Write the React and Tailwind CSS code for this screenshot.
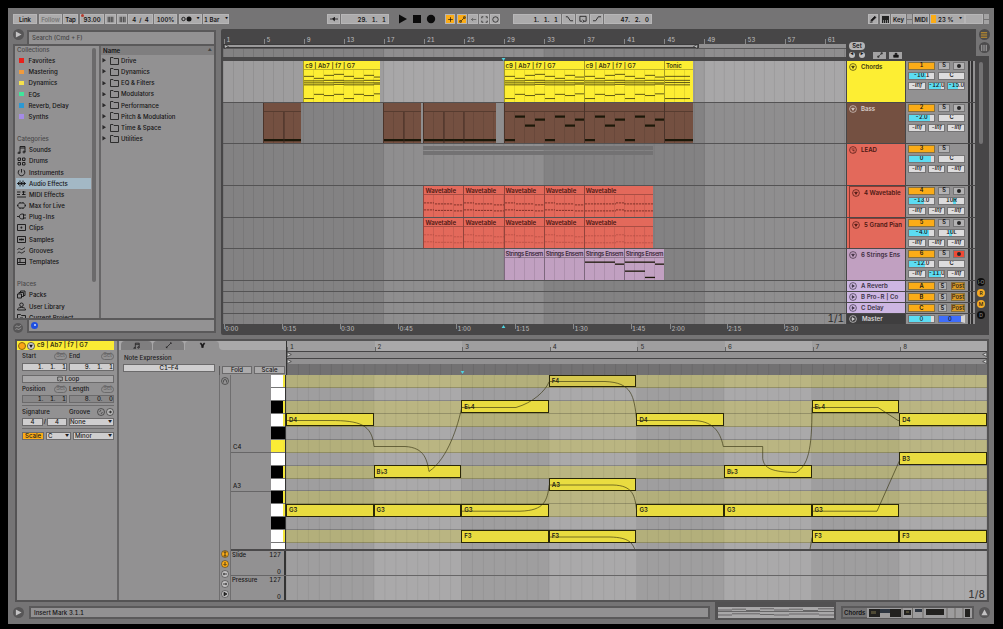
import clsx from 'clsx';

const BAR = 10.02;
const BEAT_W = 87.6;
const ROW_H = 12.95;

const collections = [
    ['Favorites', 'bg-[#e8211c]'],
    ['Mastering', 'bg-[#f09a3c]'],
    ['Dynamics', 'bg-[#f5e04c]'],
    ['EQs', 'bg-[#3fe59b]'],
    ['Reverb, Delay', 'bg-[#2c98d3]'],
    ['Synths', 'bg-[#a58be6]'],
];

const categories = [
    ['Sounds', 'M3 8V1.5h5V7M3 3h5M3 8a1 1 0 1 1-2 0 1 1 0 0 1 2 0M8 7a1 1 0 1 1-2 0 1 1 0 0 1 2 0'],
    ['Drums', 'M1 1h2.5v2.5H1zM5.5 1H8v2.5H5.5zM1 5.5h2.5V8H1zM5.5 5.5H8V8H5.5z'],
    ['Instruments', 'M4.5 1v3.5M2.5 1.8A3.3 3.3 0 1 0 6.5 1.8'],
    ['Audio Effects', 'M0 4.5h9M1.5 3v3M3 1.5v6M4.5 3v3M6 1.5v6M7.5 3v3'],
    ['MIDI Effects', 'M0 2h3.5M0 4.5h3M0 7h9M5 2h3.5M5 4.5h3.5M6.5 1v4'],
    ['Max for Live', 'M2.5 2h4l1.5 1.5v2L6.5 7h-4L1 5.5v-2zM0 4.5h1M8 4.5h1M3 1v1M6 1v1M3 7v1M6 7v1'],
    ['Plug-Ins', 'M0 4.5h2.5M2.5 4.5c0-2 1-2.5 4-2.5v5c-3 0-4-.5-4-2.5M6.5 3H9M6.5 6H9'],
    ['Clips', 'M.5 1.5h8v6h-8zM4 3.8l1.2.7L4 5.3z'],
    ['Samples', 'M.5 1.5h8v6h-8zM2 4.5h5M3 3.5v2M4.5 3.5v2M6 3.5v2'],
    ['Grooves', 'M.5 3.5c2-2 3 0 4 0s2.5-1.5 3.5-2M.5 7c2-2 3 0 4 0S7 5.5 8 5'],
    ['Templates', 'M.5 1.5h8v6h-8zM3 1.5v4M.5 5.5h8'],
];

const places = [
    ['Packs', 'M.5 4h4v4h-4zM2 4V2.5h4.5v4H4.5M3.5 2.5V1H8v4.5H6.5'],
    ['User Library', 'M4.5 1a1.8 1.8 0 1 1 0 3.6 1.8 1.8 0 0 1 0-3.6M.5 8c0-2 1.5-2.5 4-2.5s4 .5 4 2.5z'],
    ['Current Project', 'M.5 8.5v-7h3l1 1h4v6M3 5h3v3H3z'],
];

const folders = ['Drive', 'Dynamics', 'EQ & Filters', 'Modulators', 'Performance', 'Pitch & Modulation', 'Time & Space', 'Utilities'];

// [x, y, width] in pixels inside the note area of one 80px clip
const chordNotes = [
    [0, 5.5, 10], [10, 7.5, 10], [20, 4.5, 10], [30, 3.5, 10], [40, 5.5, 10], [50, 7.5, 10], [60, 4.5, 10], [70, 6.2, 10],
    [0, 10, 20], [20, 9.5, 20], [40, 10, 20], [60, 9.5, 20],
    [0, 12, 10], [10, 12, 20], [30, 11.5, 10], [40, 12, 40], [0, 14, 30], [30, 13.5, 10], [40, 14, 30], [70, 13.3, 10],
    [0, 27.7, 10], [10, 23.5, 10], [20, 24.7, 10], [30, 23.5, 10], [40, 27.7, 10], [50, 23.5, 10], [60, 24.7, 10], [70, 23, 10],
];
const tonicNotes = [[0, 5.5, 25], [0, 9.5, 25], [0, 11.7, 25], [0, 14, 25], [0, 27.7, 25]];
const bassNotes = [
    [0, 26.5, 10], [10, 3, 10], [20, 12, 10], [30, 6, 10],
    [40, 26.5, 10], [50, 3, 10], [60, 12, 10], [70, 6, 10],
];
const wavePart = [[0, 7, 10], [11, 8, 18], [30, 9, 10], [0, 14, 10], [11, 14.5, 18], [30, 15, 10]];
const waveLong = [[0, 8, 31], [31, 7, 8], [39, 8, 30], [0, 15, 31], [31, 14, 8], [39, 15, 30]];

const waves = (soft) => [
    ...[21, 25, 29, 33].map((b) => ({ at: b, w: 40.1, name: 'Wavetable', notes: wavePart, dash: true, soft })),
    { at: 37, w: 69.5, name: 'Wavetable', notes: waveLong, dash: true, soft },
];

const tracks = [
    {
        name: 'Chords', num: '1', h: 'h-[42px]', color: 'bg-[#fdee33]', ink: 'text-[#3a3510]',
        vol: '-10.1', fill: 17, pan: 'C', sends: ['-inf', '-12.0', '-15.0'], sendFill: [0, 12, 10],
        clips: [
            { at: 9, w: 77, name: 'c9 | Ab7 | f7 | G7', notes: chordNotes },
            { at: 29, w: 80.3, name: 'c9 | Ab7 | f7 | G7', notes: chordNotes },
            { at: 37, w: 80.3, name: 'c9 | Ab7 | f7 | G7', notes: chordNotes },
            { at: 45, w: 29.5, name: 'Tonic', notes: tonicNotes },
        ],
        thick: 0.7,
    },
    {
        name: 'Bass', num: '2', h: 'h-[41px]', color: 'bg-[#745041]', ink: 'text-[#d8cfca]',
        vol: '-2.0', fill: 21, pan: 'C', sends: ['-inf', '-inf', '-inf'], sendFill: [0, 0, 0],
        clips: [
            { at: 5, w: 38, cuts: [20], notes: [[0, 26.5, 38]] },
            { at: 17, w: 37.6, cuts: [20], notes: [[0, 26.5, 38]] },
            { at: 21, w: 73, cuts: [20, 40], notes: [[0, 26.5, 73]] },
            { at: 29, w: 80.3, notes: bassNotes },
            { at: 37, w: 80.3, notes: bassNotes },
            { at: 45, w: 29.5, notes: [[0, 26.5, 30]] },
        ],
        thick: 2.2,
    },
    {
        name: 'LEAD', num: '3', h: 'h-[42px]', color: 'bg-[#e3695b]', ink: 'text-[#4a1712]', group: true,
        vol: '0', fill: 22, pan: 'C', sends: ['-inf', '-inf', '-inf'], sendFill: [0, 0, 0], clips: [],
    },
    {
        name: '4 Wavetable', num: '4', h: 'h-[32px]', color: 'bg-[#e3695b]', ink: 'text-[#4a1712]', nested: true,
        vol: '-13.0', fill: 15, pan: '10R', panAt: 14, sends: ['-inf', '-inf', '-inf'], sendFill: [0, 0, 0],
        clips: waves(false), thick: 0.8,
    },
    {
        name: '5 Grand Pian', num: '5', h: 'h-[31px]', color: 'bg-[#e3695b]', ink: 'text-[#4a1712]', nested: true,
        vol: '-4.0', fill: 20, pan: '10L', panAt: 10, sends: ['-inf', '-inf', '-inf'], sendFill: [0, 0, 0],
        clips: waves(true), thick: 0.6,
    },
    {
        name: '6 Strings Ens', num: '6', h: 'h-[32px]', color: 'bg-[#c1a0c1]', ink: 'text-[#3d2c3e]', armed: true, tight: true,
        vol: '-12.0', fill: 16, pan: 'C', sends: ['-inf', '-11.0', '-inf'], sendFill: [0, 12, 0],
        clips: [
            { at: 29, w: 40.3, name: 'Strings Ensem', notes: [] },
            { at: 33, w: 40.3, name: 'Strings Ensem', notes: [] },
            { at: 37, w: 40.3, name: 'Strings Ensem', notes: [[0, 3, 30], [30, 5, 10]] },
            { at: 41, w: 40.3, name: 'Strings Ensem', notes: [[0, 3, 30], [30, 5, 10], [0, 12, 20], [20, 18.3, 10]] },
        ],
        thick: 1.3,
    },
];

const returns = [['A Reverb', 'A'], ['B Pro-R | Co', 'B'], ['C Delay', 'C']];

const times = [
    ['0:00', 0.5], ['0:15', 58.5], ['0:30', 116.5], ['0:45', 175], ['1:00', 233], ['1:15', 291.5],
    ['1:30', 350], ['1:45', 407.5], ['2:00', 447], ['2:15', 503.5], ['2:30', 560.5],
];

const rows = ['in', 'out', 'in', 'in', 'out', 'in', 'out', 'in', 'out', 'in', 'in', 'out', 'in', 'out'];
const blackKeys = [2, 4, 7, 9, 11];
const rollNotes = [
    ['D4', 1, 3], ['B♭3', 2, 7], ['E♭4', 3, 2], ['F4', 4, 0], ['D4', 5, 3], ['B♭3', 6, 7], ['E♭4', 7, 2], ['D4', 8, 3],
    ['B3', 8, 6], ['A3', 4, 8], ['G3', 1, 10], ['G3', 2, 10], ['G3', 3, 10], ['G3', 5, 10], ['G3', 6, 10], ['G3', 7, 10],
    ['F3', 3, 12], ['F3', 4, 12], ['F3', 7, 12], ['F3', 8, 12],
];

function Btn({ className, children }) {
    return (
        <div className={clsx('flex h-[10px] shrink-0 items-center justify-center whitespace-pre border border-[#b7b6b7]', className)}>
            {children}
        </div>
    );
}

function Icon({ d, className = 'size-[9px]', box = '0 0 9 9', fill = 'none' }) {
    return (
        <svg viewBox={box} className={clsx('shrink-0', className)} fill={fill} stroke="currentColor" strokeWidth="0.9">
            <path d={d} />
        </svg>
    );
}

function Transport() {
    return (
        <header className="flex h-[20px] items-center pl-[5px] pt-0.5 text-[6px] font-semibold">
            <Btn className="w-[24px] bg-[#acabac]">Link</Btn>
            <Btn className="ml-[2px] w-[23px] bg-[#acabac] text-[#777]">Follow</Btn>
            <Btn className="ml-px w-[15px] bg-[#acabac]">Tap</Btn>
            <Btn className="relative ml-[2px] w-[24px] bg-[#acabac]">
                93.00
                <span className="absolute -top-px left-0 size-[3px] rounded-full bg-[#b53a2c]" />
            </Btn>
            <Btn className="ml-px w-[11px] bg-[#acabac]"><Icon d="M1.5 1v7M3.5 1v7M5.5 1v7M7.5 1v7" className="size-[7px]" /></Btn>
            <Btn className="ml-px w-[10px] bg-[#acabac]"><Icon d="M1.5 1v7M3.5 1v7M6 1v7M7.8 1v7" className="size-[7px]" /></Btn>
            <Btn className="ml-px w-[25px] bg-[#acabac]">4  /  4</Btn>
            <Btn className="ml-px w-[23px] bg-[#acabac]">100%</Btn>
            <Btn className="ml-[2px] w-[23px] gap-[4px] bg-[#acabac]">
                <svg viewBox="0 0 11 6" className="h-[6px] w-[11px]">
                    <circle cx="2.5" cy="3" r="1.7" fill="none" stroke="#111" strokeWidth="0.9" />
                    <circle cx="8" cy="3" r="2.5" fill="#111" />
                </svg>
                <span className="text-[3px]">▼</span>
            </Btn>
            <Btn className="ml-px w-[26px] gap-[4px] bg-[#acabac]">1 Bar <span className="text-[3px]">▼</span></Btn>

            <Btn className="ml-[98px] w-[13px] bg-[#acabac]"><Icon d="M0 4.5h9M5 2.5l-2 2 2 2z" className="size-[8px]" fill="currentColor" /></Btn>
            <Btn className="ml-px w-[48px] justify-end bg-[#acabac] pr-[2px]">29.   1.   1</Btn>
            <svg viewBox="0 0 38 10" className="ml-[9px] h-[10px] w-[38px] shrink-0 fill-[#0b0b0b]">
                <path d="M1 0.5l8 4.500-8 4.500zM15 1h8v8h-8z" />
                <circle cx="33" cy="5" r="4.2" />
            </svg>
            <Btn className="ml-[9px] w-[10px] bg-[#fbac17]"><Icon d="M4.5 1.5v6M1.5 4.5h6" className="size-[7px]" /></Btn>
            <Btn className="ml-[2px] w-[10px] bg-[#fbac17]"><Icon d="M1 6h2v2H1zM3 6l3-3M6 1h2v2H6z" className="size-[7px]" /></Btn>
            <Btn className="ml-px w-[10px] bg-[#acabac] text-[#555]"><Icon d="M8 4.5H1.5M4 2.5l-2 2 2 2" className="size-[7px]" /></Btn>
            <Btn className="ml-px w-[10px] bg-[#acabac]"><Icon d="M1 3V1h2M6 1h2v2M8 6v2H6M3 8H1V6" className="size-[7px]" /></Btn>
            <Btn className="ml-px w-[10px] bg-[#acabac]"><Icon d="M4.5 1a3.500 3.500 0 1 1 0 7 3.500 3.500 0 0 1 0-7" className="size-[7px]" /></Btn>

            <Btn className="ml-[13px] w-[48px] justify-end bg-[#acabac] pr-[2px]">1.   1.   1</Btn>
            <Btn className="ml-px w-[13px] bg-[#acabac]"><Icon d="M1 2h2l3 4.500h3" className="size-[8px]" /></Btn>
            <Btn className="ml-px w-[13px] bg-[#acabac]"><Icon d="M3.5 7H1V1.5h7V7H5.5M4 5.500L5.800 7 4 8.500" className="size-[8px]" /></Btn>
            <Btn className="ml-px w-[13px] bg-[#acabac]"><Icon d="M0 6.500h3L6 2h3" className="size-[8px]" /></Btn>
            <Btn className="ml-px w-[48px] justify-end bg-[#acabac] pr-[2px]">47.   2.   0</Btn>

            <Btn className="ml-auto w-[10px] bg-[#acabac]"><Icon d="M1 8h3M2 6l4.500-4.500 1.300 1.300L3.300 7z" className="size-[8px]" fill="currentColor" /></Btn>
            <Btn className="ml-[2px] w-[10px] bg-[#acabac]">
                <svg viewBox="0 0 7 7" className="size-[7px]"><path d="M0 0h7v7H0z" fill="#222" /><path d="M1.5 4v3M3.5 4v3M5.5 4v3" stroke="#aaa" strokeWidth="0.7" /></svg>
            </Btn>
            <Btn className="ml-px w-[15px] bg-[#acabac]">Key</Btn>
            <div className="ml-px flex w-[5px] flex-col gap-px"><i className="h-[4.5px] bg-[#a3a2a3]" /><i className="h-[4.5px] bg-[#a3a2a3]" /></div>
            <Btn className="ml-px w-[16px] bg-[#acabac]">MIDI</Btn>
            <Btn className="ml-px w-[35px] justify-start bg-[#acabac]">
                <i className="mr-[2px] h-full w-[5px] bg-[#fbac17]" />23 %<span className="ml-auto mr-[2px] text-[3px]">▼</span>
            </Btn>
            <Btn className="w-[18px] bg-[#acabac]" />
            <div className="ml-px mr-[5px] flex w-[5px] flex-col gap-px"><i className="h-[4.5px] bg-[#a3a2a3]" /><i className="h-[4.5px] bg-[#a3a2a3]" /></div>
        </header>
    );
}

function SideRow({ children, active, head }) {
    return (
        <div className={clsx('flex h-[11.16px] w-[75px] shrink-0 items-center pl-px whitespace-nowrap first:-mt-[1.6px]', active && 'bg-[#a3b8c5]', head && 'text-[#4b4a4b]')}>
            {children}
        </div>
    );
}

function Browser() {
    return (
        <aside className="flex h-[307px] w-[208px] flex-col pl-[5px] pt-[2px] text-[6.1px] font-medium text-[#151415]">
            <div className="flex h-[13.5px]">
                <div className="-mt-px flex size-[11px] items-center justify-center rounded-full bg-[#575657]">
                    <svg viewBox="0 0 8 8" className="size-[7px]"><path d="M1 .5l6.500 3.500L1 7.500z" fill="#c4c3c4" /></svg>
                </div>
                <div className="ml-[3px] flex flex-1 items-center border-2 border-b-0 border-[#5a595a] bg-[#939293] pl-[3px] text-[6px] text-[#454445]">Search (Cmd + F)</div>
            </div>
            <div className="flex h-[276px] border-2 border-[#5a595a] bg-[#929192]">
                <nav className="relative flex w-[86px] flex-col overflow-hidden border-r-2 border-[#676667] pl-px">
                    <SideRow head>Collections</SideRow>
                    {collections.map(([name, color]) => (
                        <SideRow key={name}>
                            <i className={clsx('ml-[2px] mr-[5px] size-[4.5px]', color)} />
                            {name}
                        </SideRow>
                    ))}
                    <SideRow />
                    <SideRow head>Categories</SideRow>
                    {categories.map(([name, d]) => (
                        <SideRow key={name} active={name === 'Audio Effects'}>
                            <Icon d={d} />
                            <span className="ml-[3px]">{name}</span>
                        </SideRow>
                    ))}
                    <SideRow />
                    <SideRow head>Places</SideRow>
                    {places.map(([name, d]) => (
                        <SideRow key={name}>
                            <Icon d={d} />
                            <span className="ml-[3px]">{name}</span>
                        </SideRow>
                    ))}
                    <i className="absolute right-[3px] top-[2px] h-[234px] w-[4px] rounded bg-[#6b6a6b]" />
                </nav>
                <div className="flex-1">
                    <div className="flex h-[9.5px] items-center justify-between bg-[#7f7e7f] px-[2px] font-semibold">
                        Name <span className="text-[4px] text-[#444]">▲</span>
                    </div>
                    {folders.map((name) => (
                        <div key={name} className="flex h-[11.16px] items-center pl-px">
                            <svg viewBox="0 0 5 5" className="size-[4.5px]"><path d="M.5 0l4 2.500-4 2.500z" fill="#2b2a2b" /></svg>
                            <svg viewBox="0 0 9 8" className="ml-[3px] mr-[2.5px] h-[8px] w-[9px]" fill="none" stroke="#222" strokeWidth="0.9"><path d="M.5 7.500v-7H3l1 1h4.500v6z" /></svg>
                            {name}
                        </div>
                    ))}
                </div>
            </div>
            <div className="-mt-[2px] flex h-[15px]">
                <div className="mt-[5px] flex size-[10px] items-center justify-center rounded-full bg-[#575657] text-[#b5b4b5]">
                    <Icon d="M.5 3.500c2-2 3 0 4 0s2.500-1.500 3.500-2M.5 7c2-2 3 0 4 0S7 5.500 8 5" className="size-[7px]" />
                </div>
                <div className="ml-[4px] flex flex-1 items-center border-2 border-[#5a595a] bg-[#939293] pl-[2px]">
                    <i className="flex size-[7px] items-center justify-center rounded-full bg-[#1e4fe0]"><i className="size-[2px] rounded-full bg-[#cfdcff]" /></i>
                </div>
            </div>
        </aside>
    );
}

function Clip({ clip, track }) {
    return (
        <div
            className={clsx('absolute bottom-0 top-0 flex flex-col overflow-hidden border-l border-black/35', track.color, track.ink)}
            style={{ left: (clip.at - 1) * BAR, width: clip.w }}
        >
            <div className={clsx('h-[9px] shrink-0 whitespace-nowrap border-b border-black/25 pl-px text-[6px] font-semibold leading-[9px]', track.tight && 'tracking-[-0.35px]')}>
                {clip.name}
            </div>
            <div className="flex-1 bg-[linear-gradient(90deg,transparent_9.3px,rgba(0,0,0,.11)_9.3px)] bg-[length:10.02px_100%]">
                <svg viewBox={`0 0 ${clip.w} 31`} className="block h-[31px]" style={{ width: clip.w }}>
                    {clip.notes.map(([x, y, w], i) => (
                        <path
                            key={i}
                            d={`M${x} ${y + track.thick / 2 + 0.5}h${w}`}
                            stroke={clip.soft ? '#a8473d' : clip.dash ? '#6b241c' : '#1b1708'}
                            strokeWidth={track.thick}
                            strokeDasharray={clip.dash ? '2.2 0.8' : undefined}
                        />
                    ))}
                    {(clip.cuts || []).map((x) => (
                        <path key={x} d={`M${x} 0V31`} stroke="#3b271f" strokeWidth="0.8" />
                    ))}
                </svg>
            </div>
        </div>
    );
}

function Value({ fill = 0, at = 0, className, children }) {
    return (
        <div className={clsx('relative flex h-[8px] items-center justify-center overflow-hidden border border-[#757475] bg-[#dddcdd]', className)}>
            <i className="absolute bottom-0 top-0 bg-[#5cdcf2]" style={{ left: at, width: fill }} />
            <span className="relative">{children}</span>
        </div>
    );
}

function Meters() {
    return (
        <div className="flex w-[8px] gap-px bg-[#929192] pl-px">
            <i className="w-[2px] bg-[#333233]" />
            <i className="w-[2px] bg-[#333233]" />
        </div>
    );
}

function TrackHeader({ track }) {
    return (
        <div className={clsx('flex w-[128px] overflow-hidden border-b border-[#4a494a]', track.h)}>
            <div className={clsx('flex w-[58px] shrink-0 text-[6.1px] font-semibold', track.color, track.ink, track.nested && 'pl-[2px]')}>
                <div className={clsx('flex flex-1 items-start gap-[4px] overflow-hidden whitespace-nowrap pl-[2px] pt-px', track.nested && 'border-l border-t border-[#8b3a31]')}>
                    <svg viewBox="0 0 8 8" className="mt-[0.5px] size-[8px] shrink-0" fill="none" stroke="currentColor" strokeWidth="0.7">
                        <circle cx="4" cy="4" r="3.4" />
                        {track.group ? <path d="M2.500 3h3M3.500 4.500h2M4.500 6h1" /> : <path d="M2.600 3.200h2.800L4 5.400z" fill="currentColor" />}
                    </svg>
                    <span className="leading-[9px]">{track.name}</span>
                </div>
            </div>
            <div className="ml-px flex w-[61px] flex-col gap-[2px] bg-[#929192] pl-[2px] pt-px text-[5.6px] font-semibold leading-none text-[#161516]">
                <div className="flex">
                    <div className="flex h-[8px] w-[27px] items-center justify-center border border-[#857040] bg-[#fbac17]">{track.num}</div>
                    <div className="ml-[3px] flex h-[8px] w-[12px] items-center justify-center border border-[#757475] bg-[#b3b2b3]">S</div>
                    {!track.group && (
                        <div className={clsx('ml-[3px] flex h-[8px] w-[12px] items-center justify-center border border-[#757475]', track.armed ? 'bg-[#ee4a36]' : 'bg-[#b3b2b3]')}>
                            <i className="size-[4px] rounded-full bg-[#262526]" />
                        </div>
                    )}
                </div>
                <div className="flex">
                    <Value fill={track.fill} className="w-[27px]">{track.vol}</Value>
                    <Value fill={track.panAt ? 3 : 0} at={track.panAt} className="ml-[3px] w-[27px]">{track.pan}</Value>
                </div>
                <div className="flex gap-[2px]">
                    {track.sends.map((s, i) => (
                        <Value key={i} fill={track.sendFill[i]} className={clsx('w-[17.7px]', s === '-inf' && 'italic')}>{s}</Value>
                    ))}
                </div>
            </div>
            <Meters />
        </div>
    );
}

function Shades({ light }) {
    const dark = light ? 'bg-[#9e9d9e]' : 'bg-[#838283]';
    const pale = light ? 'bg-[#a8a7a8]' : 'bg-[#8f8e8f]';
    return (
        <>
            <i className={clsx('w-[161px]', dark)} />
            <i className={clsx('w-[160px]', pale)} />
            <i className={clsx('w-[161px]', dark)} />
            <i className={clsx('flex-1', pale)} />
        </>
    );
}

function Timeline() {
    return (
        <div className="w-[623px] text-[6px] font-medium">
            <div className="relative h-[15px] bg-[#474647] text-[#b5b4b5]">
                {Array.from({ length: 16 }, (_, i) => (
                    <span key={i} className="absolute bottom-0 flex h-[9px] items-center pl-[3px] leading-none" style={{ left: i * 4 * BAR + 0.5 }}>
                        <i className="absolute bottom-0 left-0 h-[5px] w-px bg-[#888]" />
                        {i * 4 + 1}
                    </span>
                ))}
            </div>
            <div className="h-[5px] border-b border-[#5a595a] bg-[#908f90]">
                <div className="flex h-full w-[476px] items-center justify-between border border-[#3c3b3c] bg-[#9b9a9b]">
                    <svg viewBox="0 0 5 5" className="size-[5px]"><path d="M.5.500l4 2-4 2z" fill="#bbb" stroke="#222" strokeWidth=".6" /></svg>
                    <svg viewBox="0 0 5 5" className="size-[5px]"><path d="M4.500.500l-4 2 4 2z" fill="#bbb" stroke="#222" strokeWidth=".6" /></svg>
                </div>
            </div>
            <div className="relative flex h-[8px]">
                <Shades />
                <i className="absolute inset-0 bg-[linear-gradient(90deg,rgba(0,0,0,.1)_1px,transparent_1px)] bg-[length:10.02px_100%]" />
            </div>
            <div className="relative h-[4px] bg-[#4a494a]">
                <svg viewBox="0 0 5 4" className="absolute left-[278px] top-[1px] h-[3px] w-[5px]"><path d="M0 0h5L2.500 4z" fill="#4fd3e0" /></svg>
            </div>
            <div className="relative">
                <div className="absolute inset-0 flex"><Shades /></div>
                <div className="absolute inset-x-0 top-0 flex h-[42px]"><Shades light /></div>
                <i className="absolute inset-0 bg-[linear-gradient(90deg,rgba(0,0,0,.08)_1px,transparent_1px)] bg-[length:10.02px_100%]" />
                {tracks.map((t) => (
                    <div key={t.num} className={clsx('relative border-b-[1.5px] border-[#545354]', t.h)}>
                        {t.group && (
                            <div className="absolute left-[200px] top-[2px] flex w-[230px] flex-col gap-px">
                                <i className="h-[4px] bg-[#737273]" />
                                <i className="h-[4px] bg-[#737273]" />
                            </div>
                        )}
                        {t.clips.map((c, i) => <Clip key={i} clip={c} track={t} />)}
                    </div>
                ))}
                <div className="relative h-[11px] border-b border-[#545354]" />
                <div className="relative h-[11px] border-b border-[#545354]" />
                <div className="relative h-[11px] border-b border-[#545354]" />
                <div className="relative h-[10px]">
                    <span className="absolute -top-[1px] right-[2px] text-[10px] font-normal leading-[11px] text-[#2b2a2b]">1/1</span>
                </div>
            </div>
            <div className="relative h-[10px] bg-[#474647] text-[#b5b4b5]">
                {times.map(([t, x]) => (
                    <span key={t} className="absolute top-0 pl-[1.5px] leading-[9px]" style={{ left: x }}>
                        <i className="absolute left-0 top-0 h-[5px] w-px bg-[#888]" />
                        {t}
                    </span>
                ))}
                <svg viewBox="0 0 5 4" className="absolute left-[278px] top-[1px] h-[3px] w-[5px]"><path d="M0 4h5L2.500 0z" fill="#4fd3e0" /></svg>
            </div>
        </div>
    );
}

function Headers() {
    return (
        <div className="ml-px w-[129px]">
            <div className="flex h-[32px] flex-col pl-[2px] pt-[13px] text-[6px] font-semibold">
                <div className="flex h-[7.5px] w-[16px] items-center justify-center rounded-full bg-[#b5b4b5] leading-none">Set</div>
                <div className="mt-[2px] flex items-center">
                    <i className="flex size-[6px] items-center justify-center rounded-full bg-[#c0bfc0] text-[3.5px] not-italic">◀</i>
                    <i className="ml-[4px] flex size-[6px] items-center justify-center rounded-full bg-[#c0bfc0] text-[3.5px] not-italic">▶</i>
                    <i className="ml-[8px] flex h-[7px] w-[13px] items-center justify-center bg-[#a4a3a4]"><Icon d="M2 7l5-5M1 6h2v2H1zM6 1h2v2H6z" className="size-[6px]" /></i>
                    <i className="ml-[3px] flex h-[7px] w-[13px] items-center justify-center bg-[#a4a3a4]"><Icon d="M1 4.500h7V8H1zM3 4V2h3v2" className="size-[6px]" fill="currentColor" /></i>
                </div>
            </div>
            {tracks.map((t) => <TrackHeader key={t.num} track={t} />)}
            {returns.map(([name, id]) => (
                <div key={id} className="flex h-[11px] w-[128px] border-b border-[#4a494a] text-[6.1px] font-semibold leading-none">
                    <div className="flex w-[58px] items-center gap-[4px] bg-[#cdb6e2] pl-[2px] text-[#3c3345]">
                        <svg viewBox="0 0 8 8" className="size-[8px]" fill="none" stroke="currentColor" strokeWidth="0.7"><circle cx="4" cy="4" r="3.4" /><path d="M3.200 2.600v2.800L5.400 4z" fill="currentColor" /></svg>
                        {name}
                    </div>
                    <div className="ml-px flex w-[61px] items-center bg-[#929192] pl-[2px] text-[5.8px]">
                        <div className="flex h-[8px] w-[27px] items-center justify-center border border-[#857040] bg-[#fbac17]">{id}</div>
                        <div className="ml-[3px] flex h-[8px] w-[9px] items-center justify-center border border-[#757475] bg-[#b3b2b3]">S</div>
                        <div className="ml-[4px] flex h-[8px] w-[14px] items-center justify-center border border-[#857040] bg-[#d99a26] font-medium">Post</div>
                    </div>
                    <Meters />
                </div>
            ))}
            <div className="flex h-[10px] w-[128px] text-[6.1px] font-semibold leading-none text-[#d7d6d7]">
                <div className="flex w-[58px] items-center gap-[5px] bg-[#3f3e3f] pl-[2px]">
                    <svg viewBox="0 0 8 8" className="size-[8px]" fill="none" stroke="currentColor" strokeWidth="0.7"><circle cx="4" cy="4" r="3.4" /><path d="M3.200 2.600v2.800L5.400 4z" fill="currentColor" /></svg>
                    Master
                </div>
                <div className="ml-px flex w-[61px] items-center bg-[#929192] pl-[2px] text-[5.8px] font-medium text-[#161516]">
                    <Value fill={22} className="w-[27px]">0</Value>
                    <div className="ml-[3px] flex h-[8px] w-[27px] items-center justify-center border border-[#757475] border-r-4 border-r-[#d5d4d5] bg-[#3f6dfa]">0</div>
                </div>
                <Meters />
            </div>
        </div>
    );
}

function Arrangement() {
    return (
        <section className="ml-[5px] mt-px flex h-[306px] w-[768px]">
            <div className="flex w-[755px] rounded-l-[2px] bg-[#474647] pl-[2px]">
                <Timeline />
                <Headers />
            </div>
            <div className="flex w-[13px] flex-col">
                <div className="flex h-[27px] flex-col items-center gap-[2px]">
                    <div className="ml-[3px] flex size-[11px] items-center justify-center rounded-full bg-[#4c4b4c] text-[#f0aa20]"><Icon d="M1 2h7M1 4.500h7M1 7h7" className="size-[8px]" /></div>
                    <div className="ml-[3px] flex size-[11px] items-center justify-center rounded-full bg-[#4c4b4c] text-[#c0bfc0]"><Icon d="M2 1v7M4.500 1v7M7 1v7" className="size-[8px]" /></div>
                </div>
                <div className="flex flex-1 flex-col items-center bg-[#474647] pr-px pt-[6px] text-[5px] font-medium leading-none">
                    <i className="ml-[-2px] h-[82px] w-[4px] rounded bg-[#737273]" />
                    <div className="mt-[134px] flex flex-col gap-[3px] pr-[2px]">
                        <i className="flex size-[8px] items-center justify-center rounded-full bg-[#0d0d0d] not-italic text-[#888]">I·O</i>
                        <i className="flex size-[8px] items-center justify-center rounded-full bg-[#f3ab25] not-italic">R</i>
                        <i className="flex size-[8px] items-center justify-center rounded-full bg-[#f3ab25] not-italic">M</i>
                        <i className="flex size-[8px] items-center justify-center rounded-full bg-[#0d0d0d] not-italic text-[#888]">D</i>
                    </div>
                </div>
            </div>
        </section>
    );
}

function Field({ className, children }) {
    return (
        <div className={clsx('flex h-[8px] items-center whitespace-pre border border-[#6b6a6b] leading-none', className)}>{children}</div>
    );
}

function SetPill() {
    return <span className="flex h-[7px] w-[13px] items-center justify-center rounded-full border border-[#6b6a6b] text-[5.5px] text-[#666566]">Set</span>;
}

function ClipPanel() {
    return (
        <div className="w-[102px] border-r-2 border-[#676667] text-[6.1px] font-medium leading-none text-[#1a191a]">
            <div className="flex h-[9px] w-[97px] items-center bg-[#fbec35] font-semibold text-[#35310f]">
                <i className="ml-px size-[8px] rounded-full border border-[#8a6512] bg-[#fba515]" />
                <svg viewBox="0 0 8 8" className="ml-px size-[8px]"><circle cx="4" cy="4" r="3.6" fill="#ccc" stroke="#222" strokeWidth=".6" /><path d="M2.200 2.800h3.600L4 6z" fill="#111" /></svg>
                <span className="ml-[2px]">c9 | Ab7 | f7 | G7</span>
            </div>
            <div className="ml-[5px] w-[92px]">
                <div className="mt-[2px] grid grid-cols-2 gap-x-[2px]">
                    <div className="flex h-[8px] items-center justify-between">Start <SetPill /></div>
                    <div className="flex h-[8px] items-center justify-between">End <SetPill /></div>
                </div>
                <div className="mt-[3px] grid grid-cols-2 gap-x-[2px]">
                    <Field className="justify-end bg-[#cfcecf]">1.    1.    1</Field>
                    <Field className="justify-end bg-[#cfcecf]">9.    1.    1</Field>
                </div>
                <Field className="mt-[4px] justify-center gap-[2px] bg-[#a9a8a9]"><Icon d="M3.500 7H1V1.500h7V7H5.500M4 5.500L5.800 7 4 8.500" className="size-[6px]" />Loop</Field>
                <div className="mt-[2px] grid grid-cols-2 gap-x-[2px]">
                    <div className="flex h-[8px] items-center justify-between">Position <SetPill /></div>
                    <div className="flex h-[8px] items-center justify-between">Length <SetPill /></div>
                </div>
                <div className="mt-[2px] grid grid-cols-2 gap-x-[2px]">
                    <Field className="justify-end bg-[#898889]">1.    1.    1</Field>
                    <Field className="justify-end bg-[#898889]">8.    0.    0</Field>
                </div>
                <div className="mt-[2px] h-px bg-[#6f6e6f]" />
                <div className="mt-[2px] flex h-[8px] items-center">
                    <span className="w-[47px]">Signature</span>Groove
                    <svg viewBox="0 0 17 8" className="ml-auto h-[8px] w-[17px]" fill="none" stroke="#333" strokeWidth=".7">
                        <circle cx="4" cy="4" r="3.5" /><path d="M2.500 4l1.500-2M4 6l1.500-2" /><circle cx="13" cy="4" r="3.5" fill="#bbb" /><path d="M11.500 4h3M13 2.800L14.500 4 13 5.200z" fill="#222" />
                    </svg>
                </div>
                <div className="mt-[2px] flex">
                    <Field className="w-[21px] justify-center bg-[#cfcecf]">4</Field>
                    <span className="w-[4px] text-center">/</span>
                    <Field className="w-[20px] justify-center bg-[#cfcecf]">4</Field>
                    <Field className="ml-[2px] w-[45px] justify-between bg-[#cfcecf] pr-px">None<span className="text-[4px]">▼</span></Field>
                </div>
                <div className="mt-[2px] h-px bg-[#6f6e6f]" />
                <div className="mt-[3px] flex">
                    <Field className="w-[22px] justify-center bg-[#fbac17]">Scale</Field>
                    <Field className="ml-[2px] w-[25px] justify-between bg-[#cfcecf] px-px">C<span className="text-[4px]">▼</span></Field>
                    <Field className="ml-[2px] w-[41px] justify-between bg-[#cfcecf] px-px">Minor<span className="text-[4px]">▼</span></Field>
                </div>
            </div>
        </div>
    );
}

function ExpressionPanel() {
    return (
        <div className="w-[100px] text-[6.1px] font-medium leading-none text-[#1a191a]">
            <div className="flex h-[9px] gap-px bg-[#a8a7a8] pl-[2px]">
                <div className="flex w-[31px] items-center justify-center rounded-t bg-[#7f7e7f]"><Icon d={categories[0][1]} className="size-[7px]" /></div>
                <div className="flex w-[31px] items-center justify-center rounded-t bg-[#7f7e7f]"><Icon d="M1.500 7.500l6-6M1 6.500h1.500V8M6.500 1H8v1.500" className="size-[7px]" /></div>
                <div className="flex flex-1 items-center justify-center rounded-t bg-[#929192]"><Icon d="M1.500 1.500h1.500l1.500 2.500 1.500-2.500h1.500L5.500 5v2h-2V5z" className="size-[7px]" fill="currentColor" /></div>
            </div>
            <div className="ml-[5px] mt-[4.500px]">Note Expression</div>
            <Field className="ml-[4px] mt-[3px] w-[92px] justify-center bg-[#cfcecf]">C1–F4</Field>
        </div>
    );
}

function Bands() {
    return (
        <>
            {[1, 2, 3, 4, 5, 6, 7, 8].map((n) => (
                <i key={n} className={clsx('flex-1', n % 2 ? 'bg-[#9f9e9f]' : 'bg-[#aaa9aa]')} />
            ))}
        </>
    );
}

function PianoRoll() {
    return (
        <div className="flex flex-1 flex-col text-[6px] font-medium text-[#1a191a]">
            <div className="flex h-[34px]">
                <div className="flex w-[67px] flex-col">
                    <div className="h-[9px] rounded-bl bg-[#aaa9aa]" />
                    <div className="mt-auto flex gap-[2px] border-l border-[#5a595a] pl-[2px] leading-none">
                        <Field className="mb-px w-[30px] justify-center bg-[#acabac]">Fold</Field>
                        <Field className="mb-px w-[31px] justify-center bg-[#acabac]">Scale</Field>
                    </div>
                </div>
                <div className="flex flex-1 flex-col border-l border-[#333]">
                    <div className="relative flex h-[10px]">
                        <Bands />
                        {[1, 2, 3, 4, 5, 6, 7, 8].map((n) => (
                            <span key={n} className="absolute bottom-0 flex h-[8px] items-center pl-[3px] leading-none text-[#333]" style={{ left: (n - 1) * BEAT_W }}>
                                <i className="absolute bottom-0 left-0 h-[4px] w-px bg-[#666]" />{n}
                            </span>
                        ))}
                    </div>
                    {[0, 1].map((n) => (
                        <div key={n} className="flex h-[6.5px] items-center justify-between border-t border-[#454445] bg-[#929192]">
                            <svg viewBox="0 0 5 5" className="size-[5px]"><path d="M.3.500l4 2-4 2z" fill="#ddd" stroke="#222" strokeWidth=".6" /></svg>
                            <svg viewBox="0 0 5 5" className="size-[5px]"><path d="M4.700.500l-4 2 4 2z" fill="#ddd" stroke="#222" strokeWidth=".6" /></svg>
                        </div>
                    ))}
                    <div className="relative flex-1 bg-[#727172] bg-[linear-gradient(90deg,rgba(0,0,0,.08)_1px,transparent_1px)] bg-[length:10.95px_100%]">
                        <svg viewBox="0 0 5 4" className="absolute bottom-[1px] left-[173px] h-[3px] w-[5px]"><path d="M0 0h5L2.500 4z" fill="#4fd3e0" /></svg>
                    </div>
                </div>
            </div>
            <div className="flex h-[225px]">
                <div className="flex w-[12px] flex-col items-center gap-[2px] border-x border-[#6f6e6f] pb-[2px] pt-[2px]">
                    <svg viewBox="0 0 8 8" className="mb-auto size-[8px]" fill="none" stroke="#444" strokeWidth=".8"><circle cx="4" cy="4" r="3.5" /><path d="M2.500 5.500V4a1.500 1.500 0 0 1 3 0v1.500" /></svg>
                    {['M2.500 2h3M4 2v4M2.500 6h3', 'M4 2v3M2.500 4L4 5.500 5.500 4', 'M2 4h4M3 2.800v2.400', 'M2 4h4M5 2.800v2.400', 'M3 2.200v3.600L6 4z'].map((d, i) => (
                        <svg key={i} viewBox="0 0 8 8" className="size-[8px] text-[#222]" stroke="currentColor" strokeWidth=".8">
                            <circle cx="4" cy="4" r="3.5" fill={i < 2 ? '#fbac17' : '#c3c2c3'} strokeWidth=".5" /><path d={d} fill={i === 4 ? 'currentColor' : 'none'} />
                        </svg>
                    ))}
                </div>
                <div className="flex flex-1 flex-col">
                    <div className="flex h-[176px] border-b-2 border-[#4a494a]">
                        <div className="w-[40px] leading-none">
                            <div className="flex h-[78px] items-end border-b border-[#676667] pb-[2px] pl-[2px]">C4</div>
                            <div className="flex h-[39px] items-end border-b border-[#676667] pb-[2px] pl-[2px]">A3</div>
                        </div>
                        <div className="flex w-[15px] flex-col overflow-hidden border-r border-[#333]">
                            {rows.map((r, i) => (
                                <div
                                    key={i}
                                    className={clsx('h-[12.95px] shrink-0 border-b border-[#777]', blackKeys.includes(i) ? 'bg-black' : i === 5 ? 'bg-[#fbec35]' : 'bg-white')}
                                >
                                    {r === 'in' && <i className="ml-auto block h-full w-[2px] bg-[#f3e63a]" />}
                                </div>
                            ))}
                        </div>
                        <div className="relative flex-1 overflow-hidden">
                            <div className="absolute inset-0 flex"><Bands /></div>
                            <div className="relative">
                                {rows.map((r, i) => (
                                    <div key={i} className={clsx('h-[12.95px] border-b border-black/20', r === 'in' && 'bg-[#d2c846]/40')} />
                                ))}
                            </div>
                            <i className="absolute inset-0 bg-[linear-gradient(90deg,rgba(0,0,0,.06)_1px,transparent_1px)] bg-[length:10.95px_100%]" />
                            {rollNotes.map(([name, bar, row]) => (
                                <div
                                    key={name + bar}
                                    className={clsx('absolute flex items-center border border-[#2a2708] pl-[2px] text-[6px] font-semibold leading-none', row === 0 ? 'bg-[#d6c94f]' : 'bg-[#e9dc40]')}
                                    style={{ left: (bar - 1) * BEAT_W, top: row * ROW_H - 0.5, width: BEAT_W, height: ROW_H }}
                                >
                                    {name}
                                </div>
                            ))}
                            <svg viewBox="286 374.5 701 174" className="absolute left-0 top-0 h-[174px] w-[701px]" fill="none" stroke="#35330f" strokeOpacity="0.8" strokeWidth="0.8">
                                <path d="M286 420H330C360 420 372 424 374 446H405C425 447 427 460 429 471C448 458 458 425 461.700 407H516C533 402 545 391 549.300 381H605C632 382 634 395 636.700 420H692C712 420 720 430 723.300 446H762.700V458C764 468 772 471.500 796 472C808 465 812 450 812 407H878L898 420H900" />
                                <path d="M461.700 510.700H520C545 510 547 500 549.300 484.500H613C633 485 635 495 636.700 511M549 536.500H610C630 537 632 543 635 549M810 549L812 537M812 510.700H877L900 459" />
                            </svg>
                        </div>
                    </div>
                    {['Slide', 'Pressure'].map((name) => (
                        <div key={name} className="flex flex-1 border-b border-[#676667] last:border-b-0">
                            <div className="flex w-[55px] justify-between border-r-2 border-[#333] pl-px pr-[3px] pt-px leading-none">
                                {name}
                                <span className="flex flex-col justify-between text-right"><b className="font-medium">127</b><b className="font-medium">0</b></span>
                            </div>
                            <div className="relative flex flex-1">
                                <Bands />
                                <i className="absolute inset-0 bg-[linear-gradient(90deg,rgba(0,0,0,.06)_1px,transparent_1px)] bg-[length:10.95px_100%]" />
                                {name === 'Pressure' && <span className="absolute bottom-[1px] right-[2px] text-[10px] leading-none text-[#3c3b3c]">1/8</span>}
                            </div>
                        </div>
                    ))}
                </div>
            </div>
        </div>
    );
}

function StatusBar() {
    return (
        <footer className="flex h-[22px] pl-[5px] text-[6.1px] font-medium">
            <div className="mt-[5px] flex size-[11px] items-center justify-center rounded-full bg-[#575657]">
                <svg viewBox="0 0 8 8" className="size-[7px]"><path d="M1 .5l6.500 3.500L1 7.500z" fill="#c4c3c4" /></svg>
            </div>
            <div className="ml-[5px] mt-[4px] flex h-[13px] w-[681px] items-center border-2 border-[#5a595a] bg-[#929192] pl-[3px]">Insert Mark 3.1.1</div>
            <div className="ml-[5px] h-[18px] w-[121px] bg-[#525152] px-[2.5px] pt-[5px]">
                <svg viewBox="0 0 116 11" className="h-[11px] w-[116px]">
                    <path d="M0 0h116v11H0z" fill="#a9a8a9" />
                    <path d="M0 3h14M14 2.200h14M28 3.500h14M42 1.800h14M56 3h15M71 2.200h14M85 3.500h15M100 1.800h16M0 4.500h116M0 8h14M14 6.800h28M42 7.500h14M56 8h15M71 7h30M101 8h15" stroke="#4a494a" strokeWidth="0.7" />
                </svg>
            </div>
            <div className="ml-[5px] mt-[4px] flex h-[13px] w-[133px] items-center border-2 border-[#5a595a] bg-[#757475] pl-px font-semibold">
                Chords
                <svg viewBox="0 0 105 10" className="ml-auto h-[10px] w-[105px]">
                    <path d="M0 0h105v10H0z" fill="#9d9c9d" />
                    <path d="M2 1h11v8H2zM23 1h11v8H23zM37 2h7v5h-7zM59 1h18v6H59zM98 1h5v8h-5z" fill="#22211f" />
                    <path d="M13 1h10v4H13zM48 1h7v3h-7z" fill="#2d3540" />
                    <path d="M35 0v10M45.500 0v10M56 0v10M80 0v10M88 0v10M96 0v10" stroke="#63615c" strokeWidth="0.8" />
                    <path d="M4 3h5v3H4zM39 3h3v2h-3z" fill="#4f4a35" />
                </svg>
            </div>
            <div className="ml-[5px] mt-[5px] flex size-[11px] items-center justify-center rounded-full bg-[#575657]">
                <svg viewBox="0 0 8 8" className="size-[7px]"><path d="M4 .5L7.500 7H.5z" fill="#c4c3c4" /></svg>
            </div>
        </footer>
    );
}

export default function App() {
    return (
        <div className="h-[629px] w-[1003px] overflow-hidden bg-black p-[8px] font-['Inter',sans-serif] tabular-nums text-[#161516]">
            <div className="flex h-[616px] w-[986px] flex-col bg-[#757475]">
                <Transport />
                <div className="flex h-[311px]">
                    <Browser />
                    <Arrangement />
                </div>
                <section className="ml-[7px] flex h-[263px] w-[974px] shrink-0 border-2 border-[#545354] bg-[#929192]">
                    <ClipPanel />
                    <ExpressionPanel />
                    <PianoRoll />
                </section>
                <StatusBar />
            </div>
        </div>
    );
}
